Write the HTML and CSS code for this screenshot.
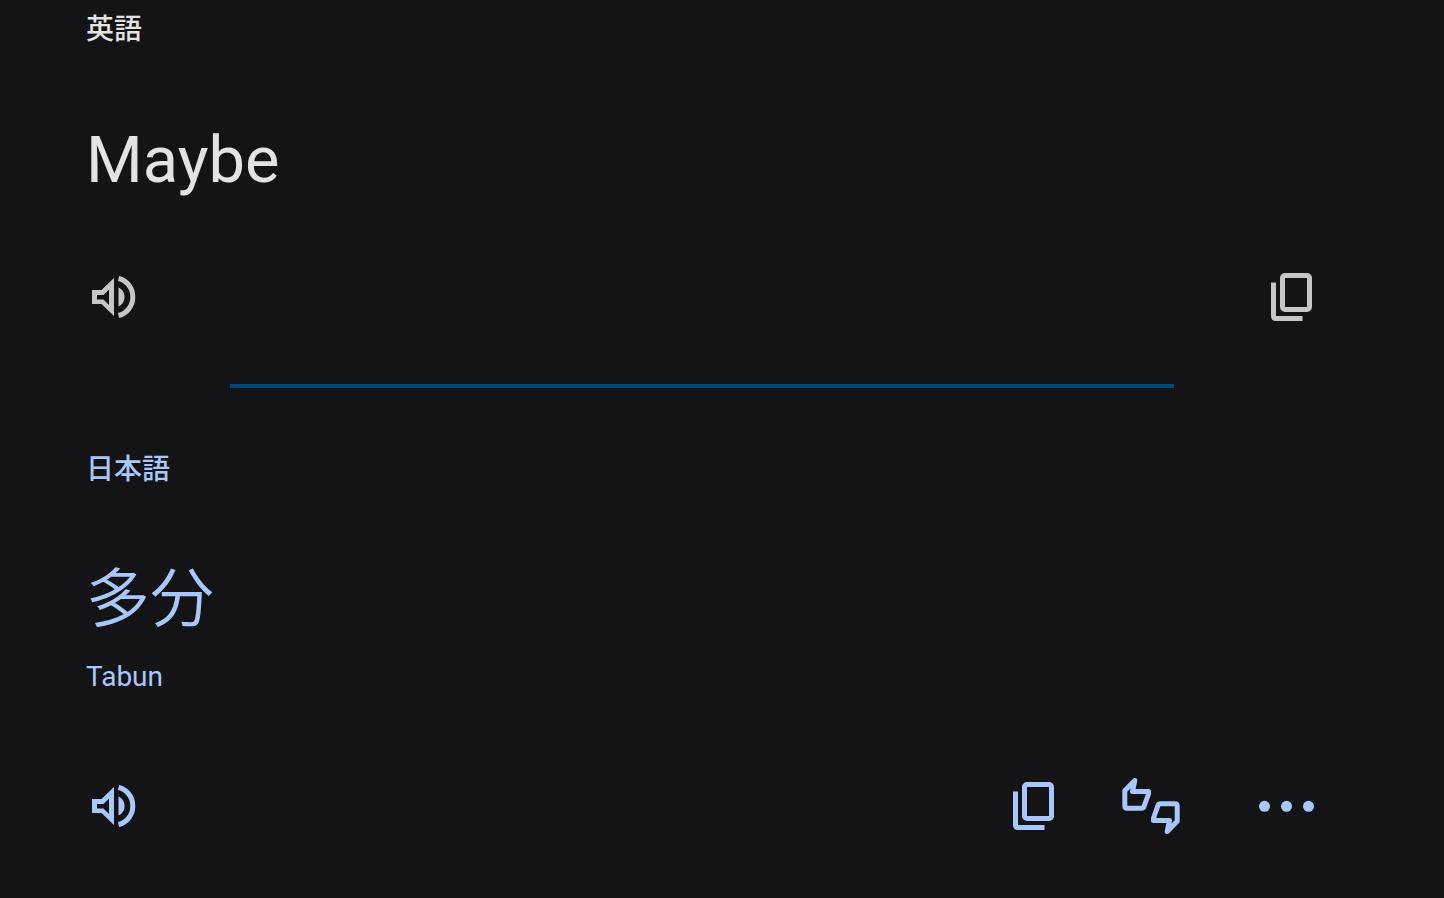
FILE: index.html
```html
<!DOCTYPE html>
<html lang="ja">
<head>
    <meta charset="UTF-8">
    <meta name="viewport" content="width=device-width, initial-scale=1.0">
    <title>翻訳</title>
    <link rel="stylesheet" href="styles.css">
</head>
<body>
    <!-- Shared icons -->
    <svg class="sprite" aria-hidden="true">
        <symbol id="icon-volume" viewBox="0 0 56 56">
            <path fill="currentColor" fill-rule="evenodd" d="M6 21H15.5L28 9V47L15.5 35H6ZM11 26V30.5H17.5L23 36V20.5L17.5 26Z"/>
            <path fill="currentColor" d="M32.5 18.5C36.5 20.3 38.5 24 38.5 28S36.5 35.7 32.5 37.5Z"/>
            <path fill="none" stroke="currentColor" stroke-width="5" d="M32.5 9.5C41 11.5 46.8 19 46.8 28S41 44.5 32.5 46.5"/>
        </symbol>
        <symbol id="icon-copy" viewBox="0 0 56 56">
            <g fill="none" stroke="currentColor" stroke-width="5">
                <rect x="18.5" y="6.5" width="27" height="34" rx="2.5"/>
                <path d="M9.5 13.5V47Q9.5 49.5 12 49.5H38.5"/>
            </g>
        </symbol>
        <symbol id="icon-thumbs" viewBox="0 0 64 64">
            <g fill="none" stroke="currentColor" stroke-width="5" stroke-linejoin="round">
                <path id="thumb" d="M15.8 6.5L5.8 16.8V32Q5.8 34.2 8 34.2H22.5Q24.3 34.2 25 32.5L29.5 20V17.5H13.5L15.8 6.5Z"/>
                <use href="#thumb" transform="rotate(180 32 32)"/>
            </g>
        </symbol>
        <symbol id="icon-more" viewBox="0 0 68 56">
            <g fill="currentColor">
                <circle cx="12.5" cy="28.3" r="5.5"/>
                <circle cx="34.5" cy="28.3" r="5.5"/>
                <circle cx="56.5" cy="28.3" r="5.5"/>
            </g>
        </symbol>
    </svg>

    <main class="container">
        <section class="source">
            <h2 class="language">英語</h2>
            <p class="phrase">Maybe</p>
            <div class="actions">
                <button type="button" aria-label="音声を聞く"><svg class="icon"><use href="#icon-volume"/></svg></button>
                <button type="button" class="push" aria-label="コピー"><svg class="icon"><use href="#icon-copy"/></svg></button>
            </div>
        </section>

        <hr>

        <section class="target">
            <h2 class="language">日本語</h2>
            <p class="phrase">多分</p>
            <p class="reading">Tabun</p>
            <div class="actions">
                <button type="button" aria-label="音声を聞く"><svg class="icon"><use href="#icon-volume"/></svg></button>
                <button type="button" class="push" aria-label="コピー"><svg class="icon"><use href="#icon-copy"/></svg></button>
                <button type="button" aria-label="翻訳を評価"><svg class="icon icon-thumbs"><use href="#icon-thumbs"/></svg></button>
                <button type="button" class="more" aria-label="その他"><svg class="icon icon-more"><use href="#icon-more"/></svg></button>
            </div>
        </section>
    </main>
</body>
</html>
```
FILE: styles.css
```css
body {
    margin: 0;
    background-color: #141416;
    color: #e3e3e3;
    font-family: Roboto, "Noto Sans CJK JP", sans-serif;
}
.sprite {
    position: absolute;
    width: 0;
    height: 0;
}
.container {
    padding: 10px 124px 60px 86px;
}
.language {
    margin: 0;
    font-size: 28px;
    font-weight: 500;
    line-height: 40px;
}
.phrase {
    margin: 70px 0 0;
    font-size: 65px;
    line-height: 80px;
}
.actions {
    display: flex;
    align-items: center;
    gap: 57px;
    height: 56px;
    margin-top: 69px;
    color: #c4c7c5;
}
button {
    padding: 0;
    border: none;
    background: none;
    color: inherit;
    cursor: pointer;
}
.push {
    margin-left: auto;
}
.more {
    margin-left: 12px;
}
.icon {
    display: block;
    width: 56px;
    height: 56px;
}
.icon-thumbs {
    width: 64px;
    height: 64px;
}
.icon-more {
    width: 68px;
}
hr {
    height: 4px;
    margin: 59px 146px 62px 144px;
    border: none;
    background-color: #004a77;
}
.target,
.target .actions {
    color: #a8c7fa;
}
.target .phrase {
    font-size: 64px;
    font-weight: 350;
}
.reading {
    margin: 17px 0 0;
    font-size: 28px;
    line-height: 40px;
}
.target .actions {
    margin-top: 81px;
}
```
